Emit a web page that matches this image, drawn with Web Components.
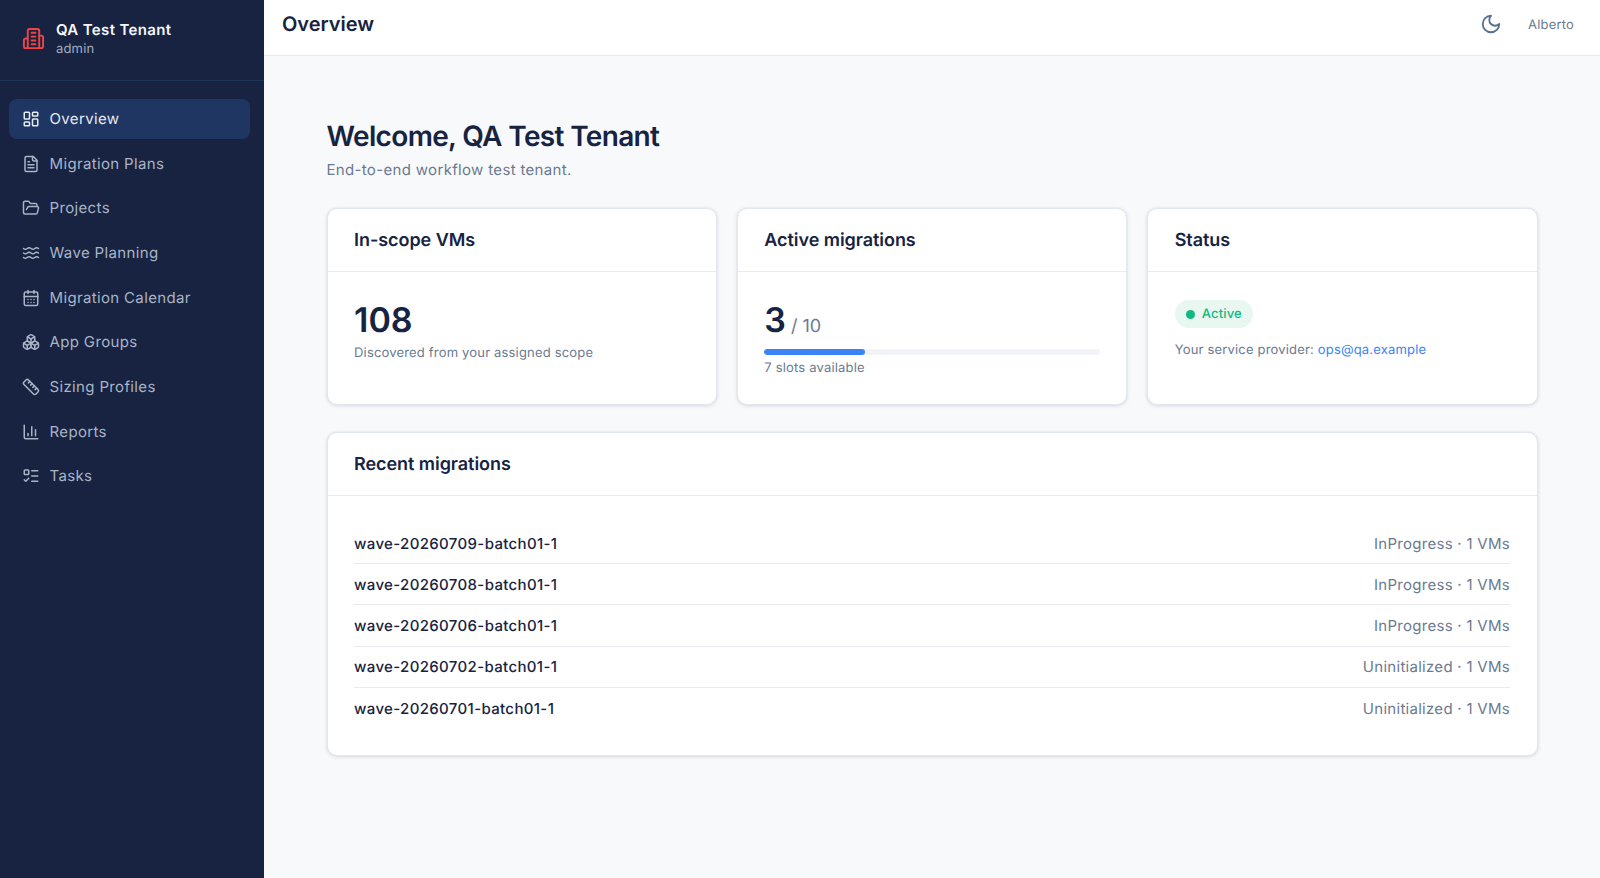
<!DOCTYPE html>
<html><head><meta charset="utf-8"><style>
html,body{margin:0;height:100%;font-family:Inter,"Liberation Sans",sans-serif;background:#f8f9fb;text-rendering:geometricPrecision}
app-shell{height:878px}
</style></head><body>
<app-shell>
  <side-bar slot="side" tenant="QA Test Tenant" role="admin">
    <nav-item icon="dash" active>Overview</nav-item>
    <nav-item icon="file">Migration Plans</nav-item>
    <nav-item icon="folder">Projects</nav-item>
    <nav-item icon="waves">Wave Planning</nav-item>
    <nav-item icon="cal">Migration Calendar</nav-item>
    <nav-item icon="groups">App Groups</nav-item>
    <nav-item icon="ruler">Sizing Profiles</nav-item>
    <nav-item icon="chart">Reports</nav-item>
    <nav-item icon="tasks">Tasks</nav-item>
  </side-bar>
  <top-bar slot="top" title="Overview" user="Alberto"></top-bar>
  <page-head title="Welcome, QA Test Tenant" sub="End-to-end workflow test tenant."></page-head>
  <card-grid>
    <info-card heading="In-scope VMs">
      <big-num>108</big-num>
      <small-note gap="1.3">Discovered from your assigned scope</small-note>
    </info-card>
    <info-card heading="Active migrations">
      <big-num of="/ 10">3</big-num>
      <pro-gress value="30"></pro-gress>
      <small-note gap="4.5">7 slots available</small-note>
    </info-card>
    <info-card heading="Status">
      <status-badge>Active</status-badge>
      <small-note gap="13">Your service provider: <a href="#" style="color:#3b82f6;text-decoration:none">ops@qa.example</a></small-note>
    </info-card>
  </card-grid>
  <info-card heading="Recent migrations" wide>
    <migration-row name="wave-20260709-batch01-1" state="InProgress · 1 VMs"></migration-row>
    <migration-row name="wave-20260708-batch01-1" state="InProgress · 1 VMs"></migration-row>
    <migration-row name="wave-20260706-batch01-1" state="InProgress · 1 VMs"></migration-row>
    <migration-row name="wave-20260702-batch01-1" state="Uninitialized · 1 VMs"></migration-row>
    <migration-row name="wave-20260701-batch01-1" state="Uninitialized · 1 VMs" last></migration-row>
  </info-card>
</app-shell>
<script>
const ICONS={
dash:'<rect x="3" y="3" width="7" height="9" rx="1"></rect><rect x="14" y="3" width="7" height="5" rx="1"></rect><rect x="14" y="12" width="7" height="9" rx="1"></rect><rect x="3" y="16" width="7" height="5" rx="1"></rect>',
file:'<path d="M15 2H6a2 2 0 0 0-2 2v16a2 2 0 0 0 2 2h12a2 2 0 0 0 2-2V7Z"></path><path d="M14 2v4a2 2 0 0 0 2 2h4"></path><path d="M10 9H8"></path><path d="M16 13H8"></path><path d="M16 17H8"></path>',
folder:'<path d="m6 14 1.5-2.9A2 2 0 0 1 9.24 10H20a2 2 0 0 1 1.94 2.5l-1.54 6a2 2 0 0 1-1.95 1.5H4a2 2 0 0 1-2-2V5a2 2 0 0 1 2-2h3.9a2 2 0 0 1 1.69.9l.81 1.2a2 2 0 0 0 1.67.9H18a2 2 0 0 1 2 2v2"></path>',
waves:'<path d="M2 6c.6.5 1.2 1 2.5 1C7 7 7 5 9.5 5c2.6 0 2.4 2 5 2 2.5 0 2.5-2 5-2 1.3 0 1.9.5 2.5 1"></path><path d="M2 12c.6.5 1.2 1 2.5 1 2.5 0 2.5-2 5-2 2.6 0 2.4 2 5 2 2.5 0 2.5-2 5-2 1.3 0 1.9.5 2.5 1"></path><path d="M2 18c.6.5 1.2 1 2.5 1 2.5 0 2.5-2 5-2 2.6 0 2.4 2 5 2 2.5 0 2.5-2 5-2 1.3 0 1.9.5 2.5 1"></path>',
cal:'<path d="M8 2v4"></path><path d="M16 2v4"></path><rect x="3" y="4" width="18" height="18" rx="2"></rect><path d="M3 10h18"></path><path d="M8 14h.01"></path><path d="M12 14h.01"></path><path d="M16 14h.01"></path><path d="M8 18h.01"></path><path d="M12 18h.01"></path><path d="M16 18h.01"></path>',
groups:'<path d="M2.97 12.92A2 2 0 0 0 2 14.63v3.24a2 2 0 0 0 .97 1.71l3 1.8a2 2 0 0 0 2.06 0L12 19v-5.5l-5-3-4.03 2.42Z"></path><path d="m7 16.5-4.74-2.85"></path><path d="m7 16.5 5-3"></path><path d="M7 16.5v5.17"></path><path d="M12 13.5V19l3.97 2.38a2 2 0 0 0 2.06 0l3-1.8a2 2 0 0 0 .97-1.71v-3.24a2 2 0 0 0-.97-1.71L17 10.5l-5 3Z"></path><path d="m17 16.5-5-3"></path><path d="m17 16.5 4.74-2.85"></path><path d="M17 16.5v5.17"></path><path d="M7.97 4.42A2 2 0 0 0 7 6.13v4.37l5 3 5-3V6.13a2 2 0 0 0-.97-1.71l-3-1.8a2 2 0 0 0-2.06 0l-3 1.8Z"></path><path d="M12 8 7.26 5.15"></path><path d="m12 8 4.74-2.85"></path><path d="M12 13.5V8"></path>',
ruler:'<path d="M21.3 15.3a2.4 2.4 0 0 1 0 3.4l-2.6 2.6a2.4 2.4 0 0 1-3.4 0L2.7 8.7a2.41 2.41 0 0 1 0-3.4l2.6-2.6a2.41 2.41 0 0 1 3.4 0Z"></path><path d="m14.5 12.5 2-2"></path><path d="m11.5 9.5 2-2"></path><path d="m8.5 6.5 2-2"></path><path d="m17.5 15.5 2-2"></path>',
chart:'<path d="M3 3v16a2 2 0 0 0 2 2h16"></path><path d="M8 17v-3"></path><path d="M13 17V5"></path><path d="M18 17V9"></path>',
tasks:'<rect x="3" y="4" width="6" height="6" rx="1"></rect><path d="m3 17 2 2 4-4"></path><path d="M13 5h8"></path><path d="M13 12h8"></path><path d="M13 19h8"></path>',
building:'<path d="M6 22V4a2 2 0 0 1 2-2h8a2 2 0 0 1 2 2v18Z"></path><path d="M6 12H4a2 2 0 0 0-2 2v6a2 2 0 0 0 2 2h2"></path><path d="M18 9h2a2 2 0 0 1 2 2v9a2 2 0 0 1-2 2h-2"></path><path d="M10 6h4"></path><path d="M10 10h4"></path><path d="M10 14h4"></path><path d="M10 18h4"></path>',
moon:'<path d="M12 3a6 6 0 0 0 9 9 9 9 0 1 1-9-9Z"></path>'};
const svg=(name,size,color,sw=2)=>`<svg xmlns="http://www.w3.org/2000/svg" width="${size}" height="${size}" viewBox="0 0 24 24" fill="none" stroke="${color}" stroke-width="${sw}" stroke-linecap="round" stroke-linejoin="round" style="display:block;flex:none">${ICONS[name]}</svg>`;
class Base extends HTMLElement{
  connectedCallback(){ if(!this.shadowRoot) this.attachShadow({mode:'open'}); this.shadowRoot.innerHTML=this.view(); }
}
customElements.define('app-shell',class extends Base{view(){return `<style>
:host{display:grid;grid-template-columns:264px 1fr;grid-template-rows:56px 1fr;width:100%;overflow:hidden}
.s{grid-row:1/3}
main{padding:62px 62.5px 0;min-width:0;display:flex;flex-direction:column}
</style><div class="s"><slot name="side"></slot></div><slot name="top"></slot><main><slot></slot></main>`}});
customElements.define('side-bar',class extends Base{view(){return `<style>
:host{display:flex;flex-direction:column;height:878px;background:#172341;box-sizing:border-box}
header{height:81px;box-sizing:border-box;border-bottom:1px solid #1e3358;display:flex;align-items:center;padding:0 24px 3px 22px;gap:11px}
.t{font-size:15px;font-weight:600;color:#f5f7fa;line-height:20px;letter-spacing:.35px}
.r{font-size:13px;color:#a3afc2;line-height:18px;letter-spacing:.18px}
nav{padding:18px 14px 0 9px;display:flex;flex-direction:column;gap:4.67px}
</style><header>${svg('building',23,'#ef4444')}<div><div class="t">${this.getAttribute('tenant')}</div><div class="r">${this.getAttribute('role')}</div></div></header><nav><slot></slot></nav>`}});
customElements.define('nav-item',class extends Base{view(){const a=this.hasAttribute('active');return `<style>
:host{display:flex;align-items:center;height:40px;gap:9.5px;padding:0 13px;border-radius:8px;font-size:15px;letter-spacing:.35px;color:${a?'#e6eaf1':'#a9b4c6'};background:${a?'#1f3663':'transparent'}}
span{margin-bottom:1px}
</style>${svg(this.getAttribute('icon'),18,a?'#e6eaf1':'#a9b4c6')}<span><slot></slot></span>`}});
customElements.define('top-bar',class extends Base{view(){return `<style>
:host{display:flex;align-items:center;height:56px;box-sizing:border-box;background:#fff;border-bottom:1px solid #e6e9f0;padding:0 26px 7px 18px}
h1{margin:0;font-size:20px;font-weight:600;color:#172341;flex:1}
span{font-size:13px;letter-spacing:.18px;color:#6b7a90;margin-left:26px;margin-top:2px}
</style><h1>${this.getAttribute('title')}</h1>${svg('moon',22,'#5a7090')}<span>${this.getAttribute('user')}</span>`}});
customElements.define('page-head',class extends Base{view(){return `<style>
:host{display:block;margin-bottom:27px}
h2{margin:0;font-size:28px;font-weight:600;line-height:36px;color:#172341;letter-spacing:-.65px}
p{margin:5px 0 0;font-size:15px;line-height:22px;color:#6b7a90;letter-spacing:.33px}
</style><h2>${this.getAttribute('title')}</h2><p>${this.getAttribute('sub')}</p>`}});
customElements.define('card-grid',class extends Base{view(){return `<style>
:host{display:grid;grid-template-columns:repeat(3,1fr);gap:20px;margin-bottom:27px}
</style><slot></slot>`}});
customElements.define('info-card',class extends Base{view(){const w=this.hasAttribute('wide');return `<style>
:host{display:block;box-sizing:border-box;background:#fff;border:1px solid #e3e7ef;border-radius:10px;box-shadow:0 0 2px rgba(20,30,60,.08),0 1px 4px rgba(20,30,60,.12);height:${w?324:197}px;overflow:hidden}
h3{margin:0;height:63px;box-sizing:border-box;border-bottom:1px solid #e8ebf2;padding:0 26.5px;display:flex;align-items:center;font-size:18px;font-weight:600;letter-spacing:-.05px;color:#172341}
.b{padding:${w?'27px':'27px'} 26.5px 0}
</style><h3>${this.getAttribute('heading')}</h3><div class="b"><slot></slot></div>`}});
customElements.define('big-num',class extends Base{view(){const o=this.getAttribute('of');return `<style>
:host{display:block;font-size:34px;font-weight:600;line-height:44px;color:#172341}
span{font-size:18px;font-weight:400;line-height:1;color:#6b7a90;margin-left:5px}
</style><slot></slot>${o?`<span>${o}</span>`:''}`}});
customElements.define('small-note',class extends Base{view(){return `<style>
:host{display:block;font-size:13px;letter-spacing:.18px;line-height:18px;color:#6b7a90;margin-top:${this.getAttribute('gap')}px}
</style><slot></slot>`}});
customElements.define('pro-gress',class extends Base{view(){return `<style>
:host{display:block;height:6px;border-radius:3px;background:#f1f3f7;margin-top:5.5px;overflow:hidden}
div{height:100%;border-radius:3px;background:#3b82f6;width:${this.getAttribute('value')}%}
</style><div></div>`}});
customElements.define('status-badge',class extends Base{view(){return `<style>
:host{display:flex;width:fit-content;align-items:center;gap:7px;height:28px;box-sizing:border-box;padding:0 11px;border-radius:14px;background:#e9f7f1;color:#10b981;font-size:13px;letter-spacing:.18px;font-weight:500;margin-top:1px}
i{width:9px;height:9px;border-radius:50%;background:currentColor}
</style><i></i><slot></slot>`}});
customElements.define('migration-row',class extends Base{view(){const l=this.hasAttribute('last');return `<style>
:host{display:flex;justify-content:space-between;align-items:center;height:41.2px;box-sizing:border-box;${l?'':'border-bottom:1px solid #e8ebf2;'}font-size:15px;letter-spacing:.35px}
b{font-weight:500;color:#172341}
span{color:#6b7a90;letter-spacing:.28px}
</style><b>${this.getAttribute('name')}</b><span>${this.getAttribute('state')}</span>`}});
</script></body></html>
